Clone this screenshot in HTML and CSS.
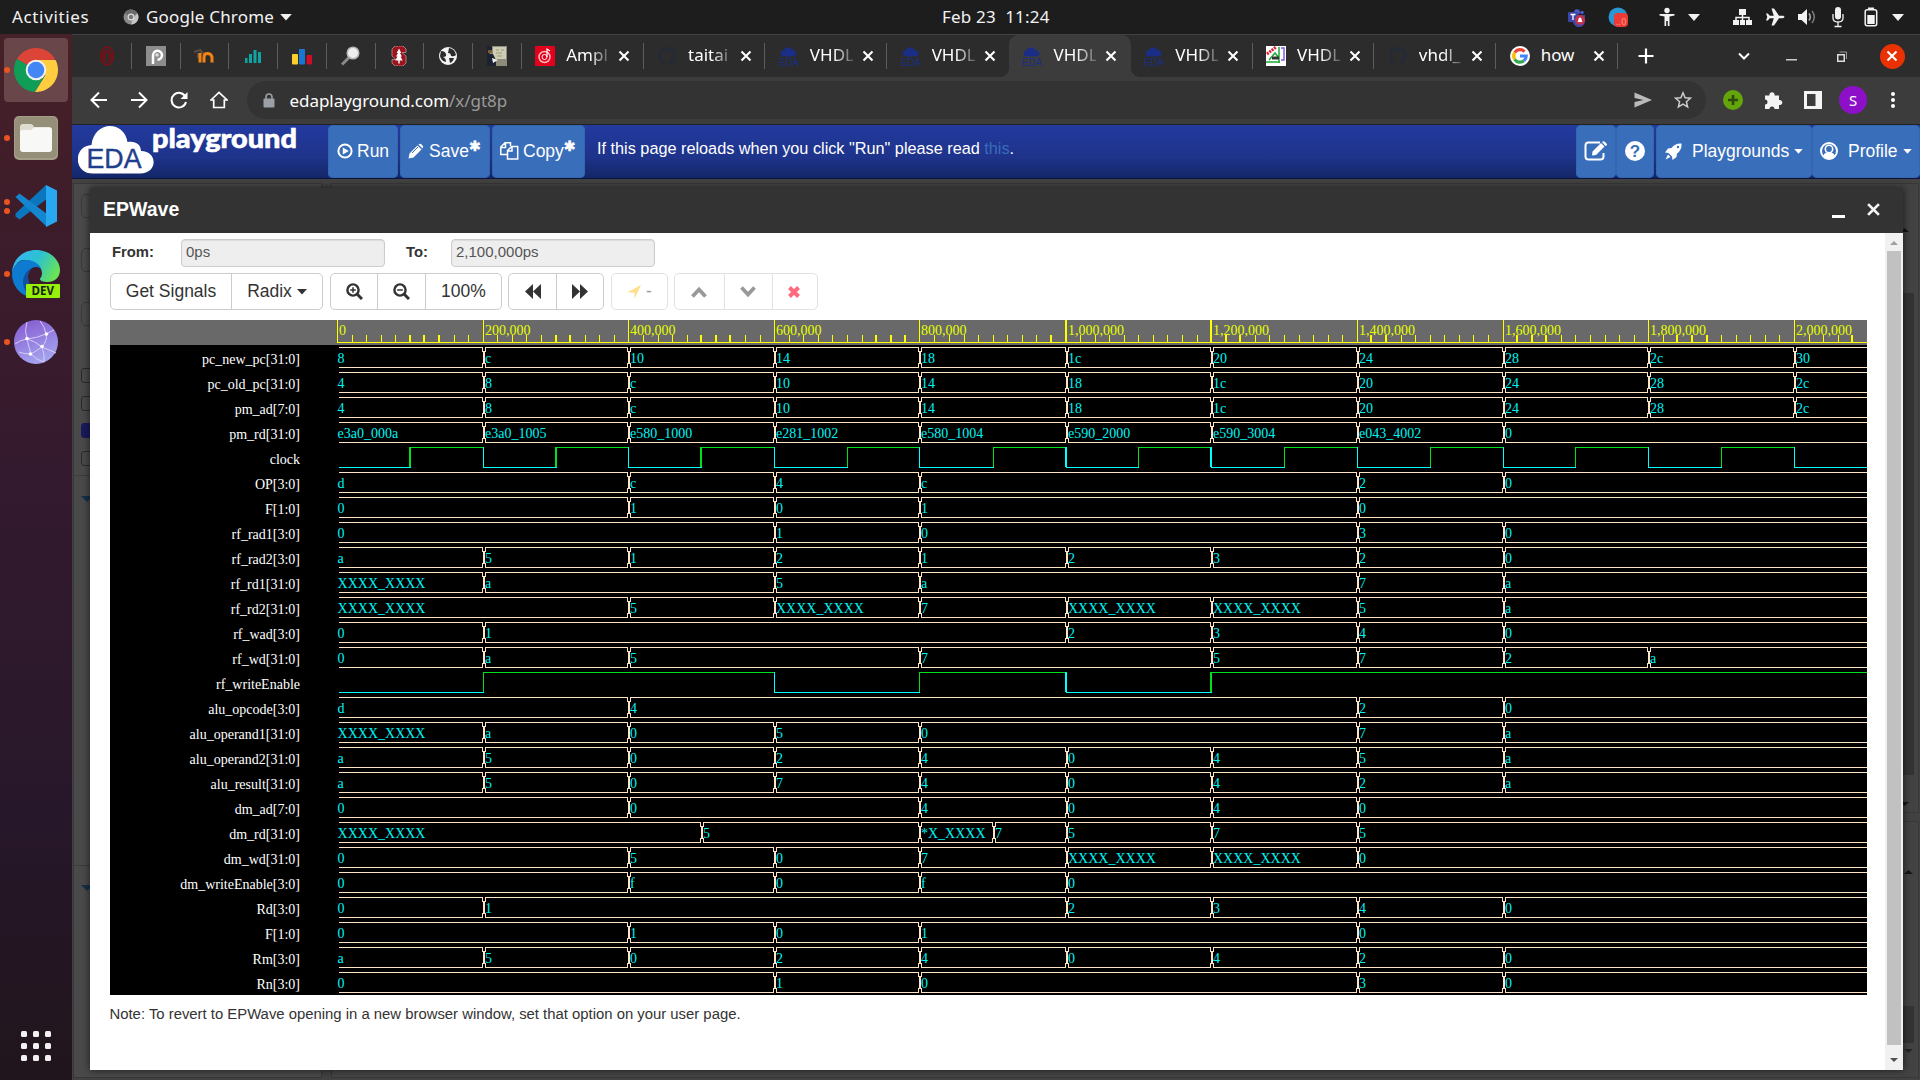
FILE: index.html
```html
<!DOCTYPE html>
<html lang="en">
<head>
<meta charset="utf-8">
<title>EPWave - EDA Playground</title>
<link rel="stylesheet" href="styles.css">
</head>
<body>
<svg class="defs" width="0" height="0">
  <symbol id="x" viewBox="0 0 12 12"><path d="M1.5 1.5l9 9M10.5 1.5l-9 9" stroke="currentColor" stroke-width="2.1" fill="none"/></symbol>
  <symbol id="caret" viewBox="0 0 10 6"><path d="M0 0h10L5 5.6z" fill="currentColor"/></symbol>
  <symbol id="eda" viewBox="0 0 20 20"><path d="M5 10.5a3 3 0 0 1-.6-6A5 5 0 0 1 12.500 3a3.500 3.500 0 0 1 3.500 2.600 2.600 2.600 0 0 1-.6 4.900z" fill="#1a2e85"/><text x="0" y="19.500" font-family="Liberation Sans" font-size="10.500" fill="#1a2e85" textLength="20" lengthAdjust="spacingAndGlyphs">EDA</text></symbol>
  <symbol id="octo" viewBox="0 0 20 20"><path d="M10 .8a9.300 9.300 0 0 0-3 18c.5.1.6-.2.6-.5v-1.700c-2.600.6-3.200-1.200-3.200-1.200-.4-1-1-1.400-1-1.400-.9-.6 0-.6 0-.6 1 .1 1.500 1 1.500 1 .8 1.400 2.200 1 2.700.8.1-.6.3-1 .6-1.300-2.100-.2-4.300-1-4.300-4.600 0-1 .4-1.900 1-2.500-.1-.3-.5-1.300 0-2.500 0 0 .8-.3 2.600 1a9 9 0 0 1 4.700 0c1.800-1.300 2.600-1 2.600-1 .5 1.200.2 2.200 0 2.500.6.6 1 1.500 1 2.500 0 3.600-2.200 4.400-4.300 4.600.4.3.7.900.7 1.800v2.600c0 .3.100.6.6.5A9.300 9.300 0 0 0 10 .8z" fill="#242b36"/></symbol>
</svg>

<header class="topbar">
  <span class="activities">Activities</span>
  <svg class="app-ico" width="16" height="16" viewBox="0 0 16 16"><circle cx="8" cy="8" r="7.500" fill="#8a8a8a"/><path d="M8 8L1.500 4.300A7.500 7.500 0 0 1 14.500 4.300z" fill="#6a6a6a"/><path d="M14.500 4.300A7.500 7.500 0 0 1 8 15.500l2-6z" fill="#c4c4c4"/><circle cx="8" cy="8" r="3.400" fill="#ddd"/><circle cx="8" cy="8" r="2.300" fill="#777"/></svg>
  <span class="app-name">Google Chrome</span>
  <svg class="app-caret" width="12" height="7"><use href="#caret"/></svg>
  <span class="clock">Feb 23&nbsp; 11:24</span>
  <div class="tray">
    <svg width="24" height="20" viewBox="0 0 24 20"><circle cx="13" cy="5" r="2.800" fill="#5059c9"/><circle cx="18" cy="5.500" r="1.800" fill="#5059c9"/><path d="M9 8h12v5a5 5 0 0 1-12 2z" fill="#4048a8"/><rect x="4" y="5" width="10" height="10" rx="1" fill="#3c46a8"/><path d="M6.500 7.500h5M9 7.500v5.500" stroke="#fff" stroke-width="1.300"/><circle cx="16" cy="13" r="5" fill="#c4314b"/><path d="M13.500 15c1-1 .5-4.500 2.500-4.500s1.500 3.500 2.500 4.500z" fill="#fff"/></svg>
    <svg class="m18" width="24" height="24" viewBox="0 0 24 24"><circle cx="12" cy="12" r="9.500" fill="#2a96d2"/><rect x="8" y="8" width="14" height="14" rx="4" fill="#ee3a34"/><text x="10" y="19.500" font-family="Noto Sans" font-size="9" fill="#ff9c94">..0</text></svg>
    <svg class="m25" width="24" height="20" viewBox="0 0 24 20"><circle cx="12" cy="3.500" r="2.700" fill="#f2f2f2"/><path d="M4.500 7h15v1.500l-5 1V19h-1.700v-5h-1.600v5H9.500V9.500l-5-1z" fill="#f2f2f2"/></svg>
    <svg class="m3 arrow" width="24" height="7" viewBox="-6 0 24 7"><path d="M0 0h12L6 7z" fill="#f2f2f2"/></svg>
    <svg class="m24" width="24" height="20" viewBox="0 0 24 20"><path d="M9 2h7v6H9zM3 13h6v5H3zM10 13h5v5h-5zM16 13h6v5h-6z" fill="#f2f2f2"/><path d="M12.500 8v5M6 13v-2.500h13V13" stroke="#f2f2f2" stroke-width="1.500" fill="none"/></svg>
    <svg class="m9" width="24" height="20" viewBox="0 0 24 20"><path d="M3 6.500h1.800l2 2.300h4L8.500 1.500H11l5 7.300h3.500c2.500 0 2.500 2.400 0 2.400H16l-5 7.300H8.500l2.300-7.300h-4l-2 2.300H3L4.300 10z" fill="#f2f2f2"/></svg>
    <svg class="m8" width="24" height="20" viewBox="0 0 24 20"><path d="M3 7h3.500L12 2v16l-5.500-5H3z" fill="#f2f2f2"/><path d="M14 6.500q2.500 3.500 0 7" stroke="#aaa" stroke-width="1.600" fill="none"/><path d="M17 4q4.500 6 0 12" stroke="#777" stroke-width="1.600" fill="none"/></svg>
    <svg class="m7" width="24" height="22" viewBox="0 0 24 22"><rect x="9" y="1" width="6" height="12.500" rx="3" fill="#f2f2f2"/><path d="M7 8v4q0 4 5 4t5-4V8M12 16v4.500M8.500 20.500h7" stroke="#f2f2f2" stroke-width="1.300" fill="none"/></svg>
    <svg class="m9" width="24" height="20" viewBox="0 0 24 20"><rect x="6.200" y="2.700" width="11.500" height="16" rx="2" fill="none" stroke="#f2f2f2" stroke-width="1.500"/><path d="M9 .5h6v2H9zM8.300 8h7.400v9H8.300z" fill="#f2f2f2"/></svg>
    <svg class="m3 arrow" width="24" height="7" viewBox="-6 0 24 7"><path d="M0 0h12L6 7z" fill="#f2f2f2"/></svg>
  </div>
</header>

<div class="desktop">
<nav class="dock">
  <div class="cell on"><i class="dots"><b></b></i>
    <svg width="44" height="44" viewBox="0 0 44 44"><path d="M22 22L3 11A22 22 0 0 1 41 11z" fill="#db4437"/><path d="M3 11a22 22 0 0 0 18 33l10-17-9-5z" fill="#0f9d58"/><path d="M22 12h19.600A22 22 0 0 1 21 44l10.500-17z" fill="#ffcd40"/><circle cx="22" cy="22" r="10.300" fill="#f1f1f1"/><circle cx="22" cy="22" r="8.300" fill="#4285f4"/></svg></div>
  <div class="cell"><i class="dots"><b></b></i>
    <svg width="44" height="44" viewBox="0 0 44 44"><rect width="44" height="44" rx="5" fill="#a49d88"/><rect x="1" y="1" width="42" height="41" rx="5" fill="#958e79"/><path d="M6 11q0-3 3-3h8q2 0 3 3h15q3 0 3 3v8H6z" fill="#dedbd0"/><path d="M6 16q0-2 2-2h9l3-2.500h15q3 0 3 3V33q0 3-3 3H9q-3 0-3-3z" fill="#f8f8f6"/></svg></div>
  <div class="cell"><i class="dots"><b></b><b></b></i>
    <svg width="44" height="44" viewBox="0 0 44 44"><path d="M32 1L1.500 29.500v3l4 3 28-21z" fill="#0a76bd"/><path d="M1.500 13l4-3.500L33 30v13z" fill="#1486d0"/><path d="M32 1l11 5.500v31L32 43z" fill="#29a8f2"/></svg></div>
  <div class="cell"><i class="dots"><b></b></i>
    <svg width="48" height="48" viewBox="0 0 48 48"><defs><linearGradient id="eg" x1="0" y1=".2" x2="1" y2=".6"><stop offset="0" stop-color="#35b4f5"/><stop offset=".5" stop-color="#2cc2d0"/><stop offset="1" stop-color="#6be352"/></linearGradient></defs><path d="M0 24C0 10 10 0 24 0s24 10 24 20c0 8-6 12-12 12-5 0-8-1-8-3 0-1 2-2 2-6 0-7-9-13-18-13C6 10 1 17 0 24z" fill="url(#eg)"/><path d="M0 24C1 15 7 10 14 10c9 0 16 6 16 12 0-3-3-5-6-5-5 0-8 5-8 10 0 9 7 16 16 15q-4 5-9 6C9 47 0 36 0 24z" fill="#0c7bd0"/><path d="M16 27c0 9 7 16 16 15q-4 5-9 6c-8-3-12-9-12-16 0-6 5-15 13-15-5 0-8 5-8 10z" fill="#134fa0"/><rect x="14" y="34" width="34" height="14" rx="1" fill="#96f00a"/><text x="19.500" y="45" font-family="Open Sans" font-weight="700" font-size="11.500" fill="#16210a" textLength="22.500" lengthAdjust="spacingAndGlyphs">DEV</text></svg></div>
  <div class="cell"><i class="dots"><b></b></i>
    <svg width="44" height="44" viewBox="0 0 44 44"><defs><linearGradient id="gg" x1="0" y1="0" x2=".4" y2="1"><stop offset="0" stop-color="#8456cf"/><stop offset="1" stop-color="#a3a2ee"/></linearGradient></defs><circle cx="22" cy="22" r="22" fill="url(#gg)"/><path d="M13 2q-3 9 0 17 2 9 4 15M1 24q5-4 12-5 10-1 19-5l8-4M13 19q8 2 15 8l14 6M17 34q5-3 11-7 6-7 4-13-1-7-6-13M17 34q-8 0-12-2M17 34q5 6 13 8M28 27q3 8 2 15" stroke="#d9ccf8" stroke-width="1" fill="none"/><g fill="#fff"><circle cx="13" cy="18.500" r="1.800"/><circle cx="32.500" cy="14" r="1.800"/><circle cx="28" cy="26.500" r="1.800"/><circle cx="16.500" cy="34" r="1.800"/></g></svg></div>
  <svg class="apps" width="30" height="30" viewBox="0 0 30 30" fill="#f2f0f1"><rect width="6" height="6" rx="1.500"/><rect x="12" width="6" height="6" rx="1.500"/><rect x="24" width="6" height="6" rx="1.500"/><rect y="12" width="6" height="6" rx="1.500"/><rect x="12" y="12" width="6" height="6" rx="1.500"/><rect x="24" y="12" width="6" height="6" rx="1.500"/><rect y="24" width="6" height="6" rx="1.500"/><rect x="12" y="24" width="6" height="6" rx="1.500"/><rect x="24" y="24" width="6" height="6" rx="1.500"/></svg>
</nav>

<main class="browser">
  <div class="tabs">
    <div class="pin"><svg width="20" height="20" viewBox="0 0 20 20" fill="none" stroke="#860b14"><ellipse cx="10" cy="10" rx="6.300" ry="9" stroke-width="1.500"/><ellipse cx="10" cy="10" rx="4" ry="6" stroke-width="1.200"/><path d="M8 13V9q0-3 2-3t2 3v4" stroke-width="1.200"/></svg></div>
    <div class="pin"><svg width="20" height="20" viewBox="0 0 20 20"><rect width="20" height="20" fill="#8d8d8d"/><path d="M7 18V9.500a4.500 4.500 0 1 1 4.500 4.300" stroke="#fff" stroke-width="2.500" fill="none"/><circle cx="11" cy="9" r="1.800" fill="#ddd"/></svg></div>
    <div class="pin"><svg width="20" height="20" viewBox="0 0 20 20"><path d="M0 6l6-2 3 3-5 1v4" stroke="#584a40" stroke-width="2" fill="none"/><path d="M6 16.500V7M10 16.500V11q0-3.500 3.500-3.500T18 11v5.500" stroke="#f08313" stroke-width="3" fill="none"/></svg></div>
    <div class="pin"><svg width="18" height="18" viewBox="0 0 18 18" fill="#0fa3a3"><rect x="1" y="11" width="2.500" height="5"/><rect x="5" y="7" width="3" height="9"/><rect x="9.500" y="3" width="3" height="13"/><rect x="14" y="5" width="3" height="11"/></svg></div>
    <div class="pin"><svg width="22" height="20" viewBox="0 0 22 20"><rect x="1" y="8" width="6" height="10.500" rx="1" fill="#f9cf2d"/><rect x="8" y="3" width="6" height="15.500" rx="1" fill="#1877d2"/><rect x="15.500" y="9" width="5.500" height="9.500" rx="1" fill="#d00d27"/></svg></div>
    <div class="pin"><svg width="20" height="20" viewBox="0 0 20 20"><path d="M1 18.500l7-7" stroke="#8a8a8a" stroke-width="3"/><circle cx="12" cy="7" r="5.800" fill="#eee" stroke="#b5b5b5" stroke-width="1.500"/></svg></div>
    <div class="pin"><svg width="20" height="20" viewBox="0 0 20 20"><path d="M6 0h8l3 3v3.500h-4L17 10v7l-3 3H6l-3-3v-3.500h4L3 10V3z" fill="#9a1420" stroke="#d9b8ba" stroke-width=".6"/><path d="M10 2.500l2.300 4.500h-1.300l2 3.500h-1.500l2.200 4h-3v3h-1.400v-3h-3l2.200-4H7l2-3.500H7.700z" fill="#fff"/></svg></div>
    <div class="pin"><svg width="20" height="20" viewBox="0 0 20 20"><circle cx="10" cy="10" r="9" fill="#f3f3f3"/><path d="M3 5q4 0 5 3t-3 3q3 1 3 5-5-1-6-6zM11 2q6 1 7 7-2 2-5 1 0-3-3-3zM11 12h5q-1 4-4 5z" fill="#2c2c2c"/></svg></div>
    <div class="pin"><svg width="20" height="20" viewBox="0 0 20 20"><rect width="20" height="20" fill="#8d8c7a"/><rect x="6" y="1" width="13" height="12" fill="#cfcdb8"/><path d="M0 0h5v5L2 8h4l3 6v6H0z" fill="#1d2230"/><path d="M9 4h3M14 4h3M9 7h6M10 10h5" stroke="#97a06a"/><path d="M5 12l6 2-5 3z" fill="#eee"/><rect x="1" y="4" width="4" height="3" fill="#7b5c35"/></svg></div>
    <div class="tab"><svg class="fav" width="20" height="20" viewBox="0 0 20 20"><rect width="20" height="20" fill="#e2001a"/><circle cx="9.500" cy="11" r="5.500" fill="none" stroke="#ffb9bf" stroke-width="1.500"/><circle cx="9.500" cy="11" r="2.500" fill="none" stroke="#fff"/><path d="M12 11V3l3 2" stroke="#fff" stroke-width="1.200" fill="none"/></svg><span>Ampl</span><svg class="cl"><use href="#x"/></svg></div>
    <div class="tab"><svg class="fav"><use href="#octo"/></svg><span>taitai</span><svg class="cl"><use href="#x"/></svg></div>
    <div class="tab"><svg class="fav"><use href="#eda"/></svg><span>VHDL</span><svg class="cl"><use href="#x"/></svg></div>
    <div class="tab bare"><svg class="fav"><use href="#eda"/></svg><span>VHDL</span><svg class="cl"><use href="#x"/></svg></div>
    <div class="tab active"><svg class="fav"><use href="#eda"/></svg><span>VHDL</span><svg class="cl"><use href="#x"/></svg></div>
    <div class="tab"><svg class="fav"><use href="#eda"/></svg><span>VHDL</span><svg class="cl"><use href="#x"/></svg></div>
    <div class="tab"><svg class="fav" viewBox="0 0 20 20"><rect width="20" height="20" fill="#fff"/><path d="M1 8l9-7" stroke="#e02030" stroke-width="3" stroke-dasharray="2 1"/><path d="M3 14l6-7 4 5M0 16h14M13 1v16" stroke="#1ea838" stroke-width="1.500" fill="none"/><path d="M15 2h3v12h-3" stroke="#8a5be0" fill="none" stroke-width="1.500"/><path d="M6 12h7" stroke="#333" stroke-width="3"/></svg><span>VHDL</span><svg class="cl"><use href="#x"/></svg></div>
    <div class="tab"><svg class="fav"><use href="#octo"/></svg><span>vhdl_</span><svg class="cl"><use href="#x"/></svg></div>
    <div class="tab"><svg class="fav" viewBox="0 0 20 20"><circle cx="10" cy="10" r="10" fill="#fff"/><g fill="none" stroke-width="3.200"><path d="M4.800 6.500A6.200 6.200 0 0 1 14.500 5.600" stroke="#ea4335"/><path d="M4.700 13.300a6.200 6.200 0 0 1 0-6.600" stroke="#fbbc05"/><path d="M13.900 14.800a6.200 6.200 0 0 1-9.200-1.500" stroke="#34a853"/><path d="M10 10h6.200q0 3-2.300 4.800" stroke="#4285f4"/></g></svg><span class="solid">how</span><svg class="cl"><use href="#x"/></svg></div>
    <svg class="plus" width="16" height="16" viewBox="0 0 16 16"><path d="M8 .5v15M.5 8h15" stroke="#fff" stroke-width="2.200"/></svg>
    <svg class="chev" width="12" height="8" viewBox="0 0 12 8"><path d="M1 1.500l5 5 5-5" stroke="#fff" stroke-width="2" fill="none"/></svg>
    <svg class="min" width="11" height="2"><rect width="11" height="1.500" fill="#ccc"/></svg>
    <svg class="restore" width="10" height="11" viewBox="0 0 10 11"><rect x=".75" y="3.750" width="6.500" height="6.500" fill="none" stroke="#ddd" stroke-width="1.500"/><path d="M2.500 1h7v7" fill="none" stroke="#999"/></svg>
    <span class="wclose"><svg width="12" height="12"><use href="#x"/></svg></span>
  </div>

  <div class="toolbar">
    <span class="tb"><svg width="18" height="18" viewBox="0 0 18 18"><path d="M17 9H2.500M9 1.500L1.500 9 9 16.500" stroke="#fff" stroke-width="2" fill="none"/></svg></span>
    <span class="tb"><svg width="18" height="18" viewBox="0 0 18 18"><path d="M1 9h14.500M9 1.500L16.500 9 9 16.500" stroke="#fff" stroke-width="2" fill="none"/></svg></span>
    <span class="tb"><svg width="18" height="18" viewBox="0 0 18 18"><path d="M15.500 6A7.300 7.300 0 1 0 16 11" stroke="#fff" stroke-width="2" fill="none"/><path d="M17.500 1v7h-7z" fill="#fff"/></svg></span>
    <span class="tb"><svg width="18" height="18" viewBox="0 0 18 18"><path d="M1 9L9 1.500 17 9h-2.700v7.500H3.700V9z" stroke="#fff" stroke-width="1.700" fill="none"/></svg></span>
    <div class="omni">
      <svg class="lock" width="12" height="15" viewBox="0 0 12 15"><rect x=".5" y="5.500" width="11" height="9" rx="1" fill="#9aa0a6"/><path d="M3 6V4a3 3 0 0 1 6 0v2" stroke="#9aa0a6" stroke-width="1.600" fill="none"/></svg>
      <span class="url">edaplayground.com<em>/x/gt8p</em></span>
      <svg class="send" width="18" height="16" viewBox="0 0 18 16"><path d="M.5.500L18 8 .5 15.500V10l9-2-9-2z" fill="#bbb"/></svg>
      <svg class="star" width="18" height="18" viewBox="0 0 18 18"><path d="M9 1.800l2.100 4.900 5.300.5-4 3.500 1.200 5.200L9 13.100l-4.600 2.800 1.200-5.200-4-3.500 5.300-.5z" stroke="#ccc" stroke-width="1.500" fill="none"/></svg>
    </div>
    <span class="tb"><svg width="20" height="20" viewBox="0 0 20 20"><circle cx="10" cy="10" r="10" fill="#62a60a"/><path d="M10 5v10M5 10h10" stroke="#2e4a0c" stroke-width="2.600"/></svg></span>
    <span class="tb"><svg width="19" height="19" viewBox="0 0 19 19"><path d="M1 4.500h4.500a2.600 2.600 0 1 1 5 0H15V9a2.600 2.600 0 1 1 0 5v4h-4.500a2.500 2.500 0 1 0-5 0H1v-4.500a2.500 2.500 0 1 0 0-5z" fill="#f4f4f4"/></svg></span>
    <span class="tb"><svg width="18" height="18" viewBox="0 0 18 18"><path d="M0 0h18v18H0zM3 3v12h8.500V3z" fill="#f4f4f4" fill-rule="evenodd"/></svg></span>
    <span class="tb"><b class="avatar">S</b></span>
    <span class="tb"><svg width="4" height="16" viewBox="0 0 4 16" fill="#fff"><circle cx="2" cy="2" r="2"/><circle cx="2" cy="8" r="2"/><circle cx="2" cy="14" r="2"/></svg></span>
  </div>

  <div class="site-head">
    <svg class="logo" width="228" height="50" viewBox="0 0 228 50"><path d="M15 47.500C-5 47.500-5 20 13.500 19 16-5.500 46-6 49.500 16 57 14.500 63 18 63 25c17 0 17 22.500-1 22.500z" fill="#fff"/><text x="8.500" y="41.800" font-family="Liberation Sans" font-size="27.500" fill="#1f3f8c" stroke="#1f3f8c" stroke-width=".4" textLength="55" lengthAdjust="spacingAndGlyphs">EDA</text><text x="74" y="22" font-family="Lato" font-weight="900" font-size="26" fill="#fff" stroke="#fff" stroke-width=".6" textLength="145" lengthAdjust="spacingAndGlyphs">playground</text></svg>
    <a class="hb run"><svg width="16" height="16" viewBox="0 0 16 16"><circle cx="8" cy="8" r="6.600" fill="none" stroke="#fff" stroke-width="2"/><path d="M5.800 4.400L11.800 8l-6 3.600z" fill="#fff"/></svg>Run</a>
    <a class="hb save"><svg width="16" height="16" viewBox="0 0 16 16"><path d="M.5 15.500l1-5L9.500 2.500l4 4-8 8zM10.500 1.500Q12 0 13.500 1.500l1 1q1.500 1.500 0 3z" fill="#fff"/><path d="M4 10l6-6" stroke="#396ebb" stroke-width="1"/></svg>Save<sup>✱</sup></a>
    <a class="hb copy"><svg width="19" height="18" viewBox="0 0 19 18"><g fill="none" stroke="#fff" stroke-width="1.500"><path d="M7 12.500H.800V5L5 .8h5.500V4M5.500 1v4.500H1"/><path d="M7.500 8.500L11.700 4.500h6v12.500H7.500zM12 4.800V9H8"/></g></svg>Copy<sup>✱</sup></a>
    <p class="notice">If this page reloads when you click "Run" please read <a>this</a>.</p>
    <a class="hb edit"><svg width="24" height="20" viewBox="0 0 24 20"><path d="M16 1.500H4.500q-3 0-3 3v11q0 3 3 3h12q3 0 3-3V12" fill="none" stroke="#fff" stroke-width="2"/><path d="M8 14.500l.5-4L17 2l3.500 3.500-8.500 8.500zM18 1q1.500-1.500 3 0l1.500 1.500q1 1 0 2L21.500 5z" fill="#fff"/></svg></a>
    <a class="hb help"><svg width="20" height="20" viewBox="0 0 20 20"><circle cx="10" cy="10" r="10" fill="#fff"/><text x="10" y="16" text-anchor="middle" font-family="Liberation Sans" font-weight="700" font-size="17" fill="#396ebb">?</text></svg></a>
    <a class="hb play"><svg width="17" height="17" viewBox="0 0 17 17"><path d="M16.500.5Q10 0 6.500 5L3 5.500 0 9.500l3.500.5L7 13.500l.5 3.500 4-3 .5-3.500Q17 7 16.500.5z" fill="#fff"/><circle cx="13" cy="4" r="1.200" fill="#396ebb"/><path d="M3 11.500L.5 16.500 5.500 14z" fill="#fff"/></svg><span>Playgrounds</span><svg width="9" height="5"><use href="#caret"/></svg></a>
    <a class="hb prof"><svg width="18" height="18" viewBox="0 0 18 18"><circle cx="9" cy="9" r="8" fill="none" stroke="#fff" stroke-width="2"/><circle cx="9" cy="7" r="3.700" fill="none" stroke="#fff" stroke-width="1.600"/><path d="M3 14q1-3 3.500-3.500h5Q14 11 15 14l-2 3H5z" fill="#fff"/></svg><span>Profile</span><svg width="9" height="5"><use href="#caret"/></svg></a>
  </div>

  <div class="page">
    <aside class="side">
      <i class="fld"></i><i class="fld"></i><i class="fld"></i>
      <i class="chk first"></i><i class="chk"></i><i class="chk ticked"></i><i class="chk"></i>
      <i class="tri one"></i><i class="tri two"></i>
    </aside>
    <div class="panes">
      <div class="pane top"><i class="bar"><u class="up"></u><b></b><u class="dn"></u></i></div>
      <div class="pane bottom"><i class="bar"><u class="up"></u><b></b><u class="dn"></u></i></div>
    </div>

    <section class="modal">
      <div class="modal-head"><h1>EPWave</h1><i class="m-min"></i><svg class="m-x" width="13" height="13" viewBox="0 0 12 12"><path d="M1 1l10 10M11 1L1 11" stroke="#f4f4f4" stroke-width="2.500"/></svg></div>
      <div class="modal-body">
        <div class="content">
          <div class="range"><label class="from">From:</label><span class="inp">0ps</span><label class="to">To:</label><span class="inp">2,100,000ps</span></div>
          <div class="btns">
            <div class="grp"><span class="w1">Get Signals</span><span class="w2">Radix<svg class="ct" width="10" height="6"><use href="#caret"/></svg></span></div>
            <div class="grp"><span class="w3"><svg width="17" height="17" viewBox="0 0 17 17"><circle cx="7" cy="7" r="5.600" fill="none" stroke="#333" stroke-width="2.400"/><path d="M11 11l5 5" stroke="#333" stroke-width="3"/><path d="M7 4.200v5.600M4.200 7h5.600" stroke="#333" stroke-width="1.500"/></svg></span><span class="w4"><svg width="17" height="17" viewBox="0 0 17 17"><circle cx="7" cy="7" r="5.600" fill="none" stroke="#333" stroke-width="2.400"/><path d="M11 11l5 5" stroke="#333" stroke-width="3"/><path d="M4.200 7h5.600" stroke="#333" stroke-width="1.500"/></svg></span><span class="w5">100%</span></div>
            <div class="grp"><span class="w6"><svg width="16" height="15" viewBox="0 0 16 15"><path d="M8 0v15L0 7.500zM16 0v15L8 7.500z" fill="#333"/></svg></span><span class="w7"><svg width="16" height="15" viewBox="0 0 16 15"><path d="M0 0l8 7.500L0 15zM8 0l8 7.500L8 15z" fill="#333"/></svg></span></div>
            <div class="grp off"><span class="w8"><svg width="14" height="14" viewBox="0 0 14 14"><path d="M14 0L7.500 14V7.500H0z" fill="#ffdf8a"/></svg>-</span></div>
            <div class="grp off"><span class="w9"><svg width="16" height="12" viewBox="0 0 16 12"><path d="M1.500 10.500L8 3.500l6.500 7" fill="none" stroke="#999" stroke-width="3.800"/></svg></span><span class="w9"><svg width="16" height="12" viewBox="0 0 16 12"><path d="M1.500 1.500l6.500 7 6.500-7" fill="none" stroke="#999" stroke-width="3.800"/></svg></span><span class="w10"><svg width="12" height="12" viewBox="0 0 12 12"><path d="M1.500 1.500l9 9M10.500 1.500l-9 9" stroke="#ff6b7c" stroke-width="4"/></svg></span></div>
          </div>
          <div class="waves" id="waves"></div>
          <p class="note">Note: To revert to EPWave opening in a new browser window, set that option on your user page.</p>
        </div>
        <div class="scroll"><u class="up"></u><b></b><u class="dn"></u></div>
      </div>
    </section>
  </div>
</main>
</div>
<script src="waves.js"></script>
</body>
</html>
```
FILE: styles.css
```css
* { box-sizing: border-box; }
html, body { margin: 0; height: 100%; overflow: hidden; }
body { width: 1920px; height: 1080px; background: #1d1d1d; font-family: "Liberation Sans", Arial, sans-serif; }
svg { display: block; flex: none; }
svg.defs { display: none; }
i, em { font-style: normal; }
u { text-decoration: none; }

/* GNOME top bar */
.topbar { height: 34px; display: flex; align-items: center; background: #1d1d1d; color: #f2f2f2; font: 17px/34px "Noto Sans", sans-serif; letter-spacing: .2px; white-space: pre; }
.activities { width: 111px; padding-left: 12px; letter-spacing: .65px; }
.app-ico { margin-left: 12px; }
.app-name { width: 128px; margin-left: 7px; }
.app-caret { margin-left: 6px; }
.clock { margin-left: 650px; width: 118px; }
.tray { display: flex; align-items: center; margin-left: auto; padding-right: 10px; }
.m3 { margin-left: 3px; } .m7 { margin-left: 7px; } .m8 { margin-left: 8px; } .m9 { margin-left: 9px; }
.m18 { margin-left: 18px; } .m24 { margin-left: 24px; } .m25 { margin-left: 25px; }

.desktop { display: flex; height: 1046px; }

/* dock */
.dock { width: 72px; padding: 4px 4px 19px; display: flex; flex-direction: column; gap: 4px; background: linear-gradient(#472128, #3d1c2a 18%, #341a2e 42%, #27172a 75%, #20151c); }
.cell { height: 64px; flex: none; display: flex; align-items: center; justify-content: center; position: relative; border-radius: 4px; }
.cell.on { background: #684649; }
.dots { position: absolute; left: 0; top: 0; height: 64px; display: flex; flex-direction: column; justify-content: center; gap: 3px; }
.dots b { width: 6px; height: 6px; border-radius: 50%; background: #e95420; }
.apps { margin: auto auto 0 17px; }

/* browser frame */
.browser { width: 1848px; display: flex; flex-direction: column; }
.tabs { height: 43px; display: flex; align-items: center; padding-left: 11px; background: #2c2c2c; border-top: 1px solid #414141; font: 17px/38px "Noto Sans", sans-serif; color: #fff; }
.pin, .tab { height: 26px; display: flex; align-items: center; border-right: 1px solid #5d5d5d; flex: none; }
.pin { width: 48.75px; justify-content: center; }
.tab { width: 121.8px; padding-left: 13.5px; }
.tab span { width: 43px; height: 40px; margin-left: 11px; overflow: hidden; -webkit-mask-image: linear-gradient(90deg, #000 55%, rgba(0,0,0,.25) 97%); mask-image: linear-gradient(90deg, #000 55%, rgba(0,0,0,.25) 97%); }
.tab span.solid { -webkit-mask-image: none; mask-image: none; }
.fav { width: 20px; height: 20px; }
.cl { width: 12px; height: 12px; margin-left: 9px; }
.tab.bare { border-color: transparent; }
.tab.active { height: 42px; background: #3c3c3c; border: 0; border-radius: 9px 9px 0 0; position: relative; }
.tab.active::before, .tab.active::after { content: ""; position: absolute; bottom: 0; width: 9px; height: 9px; }
.tab.active::before { left: -9px; background: radial-gradient(circle at 0 0, transparent 9px, #3c3c3c 9px); }
.tab.active::after { right: -9px; background: radial-gradient(circle at 100% 0, transparent 9px, #3c3c3c 9px); }
.plus { margin-left: 20px; }
.chev { margin-left: 84px; }
.min { margin: 8px 0 0 36px; }
.restore { margin-left: 40px; }
.wclose { margin-left: 33px; width: 25px; height: 25px; border-radius: 50%; background: #e93104; display: flex; align-items: center; justify-content: center; }

.toolbar { height: 48px; padding: 0 0 1px 7px; display: flex; align-items: center; background: #3c3c3c; border-bottom: 1px solid #222; }
.tb { width: 40px; display: flex; justify-content: center; }
.omni { width: 1459px; height: 38px; margin: 0 7.5px; border-radius: 19px; background: #333; display: flex; align-items: center; padding: 0 14px 0 16px; }
.url { margin-left: 15px; font: 17px/37px "Noto Sans", sans-serif; letter-spacing: -.05px; color: #fff; }
.url em { color: #9a9a9a; }
.send { margin-left: auto; }
.star { margin-left: 22px; }
.avatar { width: 28px; height: 28px; border-radius: 50%; background: #8d10c8; color: #fff; font: 15px/28px "Noto Sans", sans-serif; text-align: center; }

/* site header */
.site-head { height: 54px; display: flex; align-items: flex-start; padding-left: 6px; background: linear-gradient(#233a9f, #1e338a 60%, #132768 98%, #0b1640 99%); color: #fff; font-size: 17.5px; }
.logo { margin: 1px 22px 0 0; }
.hb { height: 53px; padding-bottom: 1px; display: flex; align-items: center; background: #396ebb; border-radius: 5px; box-shadow: inset 0 0 0 1px #3566ae; flex: none; }
.run { width: 70px; padding-left: 9px; gap: 4px; margin-right: 2px; }
.save { width: 90px; padding-left: 8px; gap: 5px; margin-right: 2px; }
.copy { width: 93px; padding-left: 8px; gap: 4px; }
.hb sup { font: 700 14px/14px "DejaVu Sans", sans-serif; -webkit-text-stroke: .5px #fff; margin: -11px 0 0 -5px; }
.copy sup { margin-left: -4px; }
.notice { margin: 0 auto 0 12px; font-size: 16.25px; line-height: 47px; }
.notice a { color: #3a6cb8; }
.edit { width: 40px; padding-left: 8px; }
.help { width: 38px; padding-left: 9px; margin-right: 2px; }
.play { width: 156px; padding-left: 9px; }
.play span { margin: 0 5px 0 10px; }
.prof { width: 108px; padding-left: 8px; }
.prof span { margin: 0 5px 0 10px; }

/* dimmed page behind the dialog */
.page { flex: 1; position: relative; display: flex; gap: 9px; padding: 4px 1px 2px; background: #424242; }
.side { width: 249px; background: linear-gradient(#4a4a4a 0 291px, #3c3c3c 291px 292px, #4a4a4a 292px 681px, #3c3c3c 681px 682px, #4a4a4a 682px); border: 1px solid #383838; padding: 10px 7px; display: flex; flex-direction: column; align-items: flex-start; }
.fld { width: 200px; height: 24px; border: 1px solid #383838; border-radius: 5px; margin-bottom: 30px; }
.chk { width: 15px; height: 15px; border: 1px solid #2a2a2a; border-radius: 3px; margin-bottom: 12.5px; }
.chk.first { margin-top: 12px; }
.chk.ticked { background: #181a5c; border-color: #181a5c; }
.tri { width: 20px; height: 6px; background: #14304a; clip-path: polygon(0 0, 60% 0, 30% 100%); }
.tri.one { margin-top: 18px; }
.tri.two { margin-top: 383px; }
.panes { flex: 1; display: flex; flex-direction: column; gap: 8px; }
.pane { border: 1px solid #383838; background: #464646; display: flex; justify-content: flex-end; }
.pane.top { height: 630px; }
.pane.bottom { flex: 1; }
.bar { width: 18px; display: flex; flex-direction: column; align-items: flex-start; background: #434343; }
.bar b { width: 14px; background: #343434; }
.bar u { width: 9px; height: 4px; background: #151515; }
.up { clip-path: polygon(50% 0, 100% 100%, 0 100%); }
.dn { clip-path: polygon(0 0, 100% 0, 50% 100%); }
.top .up { margin-top: 44px; }
.top b { margin-top: 61px; height: 482px; }
.top .dn { margin-top: 27px; }
.bottom .up { margin: 48px 0 0 4px; }
.bottom b { margin-top: 132px; height: 37px; }
.bottom .dn { margin: 6px 0 0 4px; background: #252525; }

/* EPWave dialog */
.modal { position: absolute; left: 18px; top: 9px; width: 1813px; height: 882px; background: #fff; box-shadow: 0 0 8px rgba(0,0,0,.65); display: flex; flex-direction: column; }
.modal-head { height: 45px; background: #333; display: flex; align-items: center; padding: 0 23.5px 2px 13px; }
.modal-head h1 { margin: 0 auto 0 0; font-size: 19.5px; line-height: 43px; color: #fff; }
.m-min { width: 13px; height: 3px; background: #fff; margin: 13px 22px 0 0; }
.modal-body { flex: 1; display: flex; justify-content: space-between; }
.content { padding: 6px 0 0 20px; width: 1777px; }
.range { display: flex; height: 28px; align-items: center; font-size: 15px; color: #333; }
.range label { font-weight: 700; font-size: 14.8px; padding-bottom: 2px; }
.from { width: 71px; padding-left: 2px; }
.to { width: 66px; padding-left: 21px; }
.inp { width: 204px; height: 28px; border: 1px solid #ccc; border-radius: 4px; background: #eee; box-shadow: inset 0 1px 1px rgba(0,0,0,.08); color: #555; line-height: 23px; padding-left: 4px; }
.btns { display: flex; height: 37px; margin-top: 6px; font-size: 17.5px; color: #333; }
.grp { display: flex; border: 1px solid #ccc; border-radius: 5px; margin-right: 7px; }
.grp span { display: flex; align-items: center; justify-content: center; }
.grp span + span { border-left: 1px solid #ccc; }
.grp.off, .grp.off span { border-color: #e2e2e2; }
.grp:nth-child(2) { margin-right: 6px; }
.grp:nth-child(4) { margin-right: 6px; }
.ct { margin-left: 5px; }
.w1 { width: 120px; } .w2 { width: 91px; }
.w3 { width: 46px; } .w4 { width: 48px; } .w5 { width: 76px; }
.w6 { width: 47px; } .w7 { width: 47px; }
.w8 { width: 55px; gap: 5px; color: #999; }
.w9 { width: 48.500px; } .w10 { width: 45px; padding-right: 2px; }

.waves { margin-top: 10px; width: 1757px; background: #000; font-family: "Liberation Serif", "Times New Roman", serif; font-size: 14px; }
.ruler, .sig { display: flex; height: 25px; }
.ruler { background: #696969; }
.name { width: 227px; padding-right: 37px; text-align: right; color: #fff; line-height: 29px; height: 25px; white-space: nowrap; }
.wave { width: 1530px; height: 25px; overflow: hidden; shape-rendering: crispEdges; }
.wave text { font-size: 14px; fill: #00f4f4; }
.ruler text { fill: #e6ff00; }
.bus { fill: none; stroke: #ffe4c4; stroke-width: 1; }
.note { margin: 11px 0 0 -.5px; font-size: 14.87px; line-height: 17px; color: #333; }
.scroll { width: 18px; background: #f1f1f1; display: flex; flex-direction: column; align-items: center; padding: 8px 0; }
.scroll .up { width: 8px; height: 4px; background: #a0a0a0; }
.scroll b { width: 14px; height: 794px; margin-top: 6px; background: #c1c1c1; }
.scroll .dn { width: 8px; height: 4px; margin-top: auto; background: #505050; }
```
FILE: waves.js
```js
// One step is 200,000 ps.
const STEP = 145.7, WIDTH = 1530;
const X8 = 'XXXX_XXXX';
const seq = s => s.split(' ').map((v, i) => [i, v]);
const BUS = 'bus', BIT = 'bit';

const signals = [
  ['pc_new_pc[31:0]', BUS, seq('8 c 10 14 18 1c 20 24 28 2c 30')],
  ['pc_old_pc[31:0]', BUS, seq('4 8 c 10 14 18 1c 20 24 28 2c')],
  ['pm_ad[7:0]', BUS, seq('4 8 c 10 14 18 1c 20 24 28 2c')],
  ['pm_rd[31:0]', BUS, seq('e3a0_000a e3a0_1005 e580_1000 e281_1002 e580_1004 e590_2000 e590_3004 e043_4002 0')],
  ['clock', BIT, Array.from({ length: 21 }, (_, i) => [i / 2, i % 2])],
  ['OP[3:0]', BUS, [[0, 'd'], [2, 'c'], [3, '4'], [4, 'c'], [7, '2'], [8, '0']]],
  ['F[1:0]', BUS, [[0, '0'], [2, '1'], [3, '0'], [4, '1'], [7, '0']]],
  ['rf_rad1[3:0]', BUS, [[0, '0'], [3, '1'], [4, '0'], [7, '3'], [8, '0']]],
  ['rf_rad2[3:0]', BUS, seq('a 5 1 2 1 2 3 2 0')],
  ['rf_rd1[31:0]', BUS, [[0, X8], [1, 'a'], [3, '5'], [4, 'a'], [7, '7'], [8, 'a']]],
  ['rf_rd2[31:0]', BUS, [[0, X8], [2, '5'], [3, X8], [4, '7'], [5, X8], [6, X8], [7, '5'], [8, 'a']]],
  ['rf_wad[3:0]', BUS, [[0, '0'], [1, '1'], [5, '2'], [6, '3'], [7, '4'], [8, '0']]],
  ['rf_wd[31:0]', BUS, [[0, '0'], [1, 'a'], [2, '5'], [4, '7'], [6, '5'], [7, '7'], [8, '2'], [9, 'a']]],
  ['rf_writeEnable', BIT, [[0, 0], [1, 1], [3, 0], [4, 1], [5, 0], [6, 1]]],
  ['alu_opcode[3:0]', BUS, [[0, 'd'], [2, '4'], [7, '2'], [8, '0']]],
  ['alu_operand1[31:0]', BUS, [[0, X8], [1, 'a'], [2, '0'], [3, '5'], [4, '0'], [7, '7'], [8, 'a']]],
  ['alu_operand2[31:0]', BUS, seq('a 5 0 2 4 0 4 5 a')],
  ['alu_result[31:0]', BUS, seq('a 5 0 7 4 0 4 2 a')],
  ['dm_ad[7:0]', BUS, [[0, '0'], [2, '0'], [4, '4'], [5, '0'], [6, '4'], [7, '0']]],
  ['dm_rd[31:0]', BUS, [[0, X8], [2.5, '5'], [4, '*X_XXXX'], [4.5, '7'], [5, '5'], [6, '7'], [7, '5']]],
  ['dm_wd[31:0]', BUS, [[0, '0'], [2, '5'], [3, '0'], [4, '7'], [5, X8], [6, X8], [7, '0']]],
  ['dm_writeEnable[3:0]', BUS, [[0, '0'], [2, 'f'], [3, '0'], [4, 'f'], [5, '0']]],
  ['Rd[3:0]', BUS, [[0, '0'], [1, '1'], [5, '2'], [6, '3'], [7, '4'], [8, '0']]],
  ['F[1:0]', BUS, [[0, '0'], [2, '1'], [3, '0'], [4, '1'], [7, '0']]],
  ['Rm[3:0]', BUS, seq('a 5 0 2 4 0 4 2 0')],
  ['Rn[3:0]', BUS, [[0, '0'], [3, '1'], [4, '0'], [7, '3'], [8, '0']]],
];

// Ticks (in tenths of a step) whose line straddles two pixel columns.
const wide = new Set([5, 6, 7, 15, 16, 25, 26, 27, 37, 38, 39, 49, 50, 60, 61, 62, 71, 72, 81, 82, 83, 92, 93, 94, 104]);
const px = t => Math.floor(0.5 + STEP * t) - (t === 4 ? 1 : 0);
const rect = (x, y, w, h, c) => `<rect x="${x}" y="${y}" width="${w}" height="${h}" fill="${c}"/>`;
const vline = (t, y, h, c) => {
  const w = wide.has(Math.round(t * 10)) ? 2 : 1;
  return rect(px(t) - (w - 1), y, w, h, c);
};

function ruler() {
  let s = rect(0, 22, WIDTH, 1, '#ff0');
  for (let j = 0; j <= 104; j++) {
    const major = j % 10 === 0;
    s += vline(j / 10, major ? 0 : 15, major ? 22 : 7, '#ff0');
    if (major) s += `<text x="${px(j / 10) + 2}" y="15">${(j * 20000).toLocaleString('en-US')}</text>`;
  }
  return s;
}

function bus(data) {
  let s = '', d = '';
  data.forEach(([t, v], i) => {
    const a = i ? px(t) + 2 : 2;
    const next = data[i + 1];
    const b = next ? px(next[0]) : WIDTH;
    d += `M${a} 2.500H${b}M${a} 22.500H${b}`;
    if (i) {
      const l = px(t) - 0.5;
      d += `M${l} 2V7M${l + 1} 6V19M${l} 18V23M${l + 3} 2V7M${l + 2} 6V19M${l + 3} 18V23`;
    }
    s += `<text x="${i ? px(t) + 2 : 0.6}" y="18">${v}</text>`;
  });
  return `<path class="bus" d="${d}"/>` + s;
}

function bit(data) {
  let s = '';
  data.forEach(([t, v], i) => {
    const a = i ? px(t) : 2;
    const b = data[i + 1] ? px(data[i + 1][0]) + 1 : WIDTH;
    const c = v ? '#00e01c' : '#0ff';
    if (i) s += vline(t, 2, 20, c);
    s += rect(a, v ? 2 : 22, b - a, 1, c);
  });
  return s;
}

const row = (cls, name, body) =>
  `<div class="${cls}"><div class="name">${name}</div><svg class="wave">${body}</svg></div>`;

document.getElementById('waves').innerHTML = row('ruler', '', ruler()) +
  signals.map(([n, kind, data]) => row('sig', n, kind === BUS ? bus(data) : bit(data))).join('');
```
